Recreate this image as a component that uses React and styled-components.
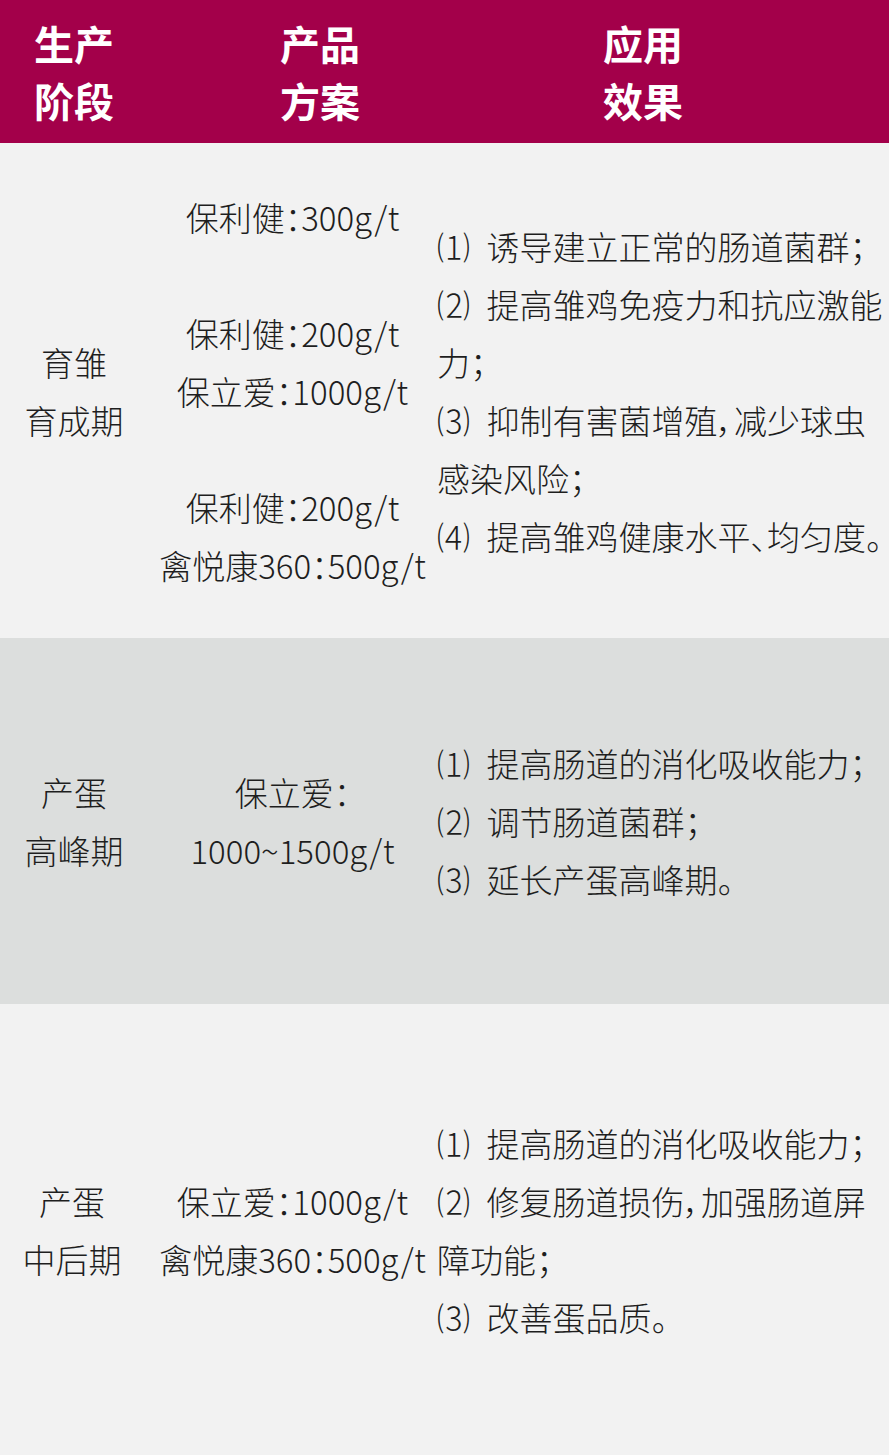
import React from "react";
import styled, { createGlobalStyle } from "styled-components";

const GlobalStyle = createGlobalStyle`
  html, body { margin: 0; padding: 0; }
  body {
    font-family: "Noto Sans CJK SC", "Noto Sans", sans-serif;
    background: #f2f2f2;
  }
`;

const Table = styled.div`
  width: 889px;
  overflow: hidden;
`;

const Header = styled.div`
  display: grid;
  grid-template-columns: 148px 344px 1fr;
  align-items: center;
  height: 143px;
  background: #a3004a;
  color: #fff;
  font-size: 40px;
  font-weight: 700;
  line-height: 57px;
`;

const HeadCell = styled.div`
  text-align: ${(p) => (p.$indent ? "left" : "center")};
  padding-left: ${(p) => p.$indent || 0}px;
`;

const Row = styled.div`
  display: grid;
  grid-template-columns: 148px 289px 452px;
  align-items: center;
  height: ${(p) => p.$h}px;
  background: ${(p) => (p.$shade ? "#dcdedd" : "#f2f2f2")};
  color: #1e1e1e;
  font-size: 33px;
  font-weight: 300;
  line-height: 58px;
  font-feature-settings: "palt";
`;

const Stage = styled.div`
  text-align: center;
  padding-right: ${(p) => p.$shift || 0}px;
`;

const Plan = styled.div`
  text-align: center;
  white-space: nowrap;
`;

const DoseGroup = styled.div`
  & + & {
    margin-top: 58px;
  }
`;

const Effects = styled.div``;

const Effect = styled.div``;

const rows = [
  {
    h: 495,
    stage: ["育雏", "育成期"],
    plan: [["保利健：300g/t"], ["保利健：200g/t", "保立爱：1000g/t"], ["保利健：200g/t", "禽悦康360：500g/t"]],
    effects: [
      "诱导建立正常的肠道菌群；",
      "提高雏鸡免疫力和抗应激能力；",
      "抑制有害菌增殖，减少球虫感染风险；",
      "提高雏鸡健康水平、均匀度。",
    ],
  },
  {
    h: 366,
    shade: true,
    stage: ["产蛋", "高峰期"],
    plan: [["保立爱：", "1000~1500g/t"]],
    effects: ["提高肠道的消化吸收能力；", "调节肠道菌群；", "延长产蛋高峰期。"],
  },
  {
    h: 451,
    shift: 4,
    stage: ["产蛋", "中后期"],
    plan: [["保立爱：1000g/t", "禽悦康360：500g/t"]],
    effects: ["提高肠道的消化吸收能力；", "修复肠道损伤，加强肠道屏障功能；", "改善蛋品质。"],
  },
];

const marks = ["⑴", "⑵", "⑶", "⑷"];

export default function App() {
  return (
    <Table>
      <GlobalStyle />
      <Header>
        <HeadCell>生产<br />阶段</HeadCell>
        <HeadCell>产品<br />方案</HeadCell>
        <HeadCell $indent={111}>应用<br />效果</HeadCell>
      </Header>
      {rows.map((r, i) => (
        <Row key={i} $h={r.h} $shade={r.shade}>
          <Stage $shift={r.shift}>
            {r.stage.map((s) => (
              <div key={s}>{s}</div>
            ))}
          </Stage>
          <Plan>
            {r.plan.map((g, j) => (
              <DoseGroup key={j}>
                {g.map((line) => (
                  <div key={line}>{line}</div>
                ))}
              </DoseGroup>
            ))}
          </Plan>
          <Effects>
            {r.effects.map((e, k) => (
              <Effect key={k}>{marks[k] + "\u2002" + e}</Effect>
            ))}
          </Effects>
        </Row>
      ))}
    </Table>
  );
}
